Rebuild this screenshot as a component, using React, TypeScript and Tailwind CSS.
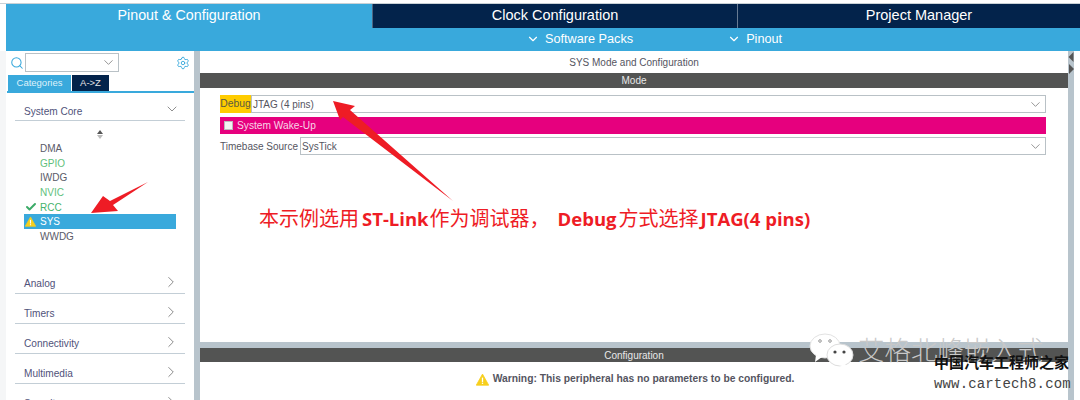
import React from "react";
import { ChevronDown, ChevronRight, Search, Settings, Check } from "lucide-react";

const sans = "font-['Liberation_Sans','Noto_Sans_CJK_SC',sans-serif]";

function Warn({ size = 12 }: { size?: number }) {
  return (
    <svg width={size} height={size} viewBox="0 0 24 24" className="shrink-0">
      <path d="M12 2 L23.5 22.5 H0.5 Z" fill="#f7cf1d" stroke="#f7cf1d" strokeLinejoin="round" strokeWidth="1.5" />
      <rect x="10.8" y="8.5" width="2.4" height="8" fill="#fff" />
      <rect x="10.8" y="17.8" width="2.4" height="2.4" fill="#fff" />
    </svg>
  );
}

function Group({ label, open }: { label: string; open?: boolean }) {
  return (
    <div className={`ml-[9px] flex h-[30px] w-[170px] items-end justify-between border-b border-[#c3ced6] pl-[9px] pr-[5px] text-[10.1px] text-[#50527a] ${open ? "pb-[1px]" : "pb-[2px]"}`}>
      <span className="leading-[14px]">{label}</span>
      {open ? (
        <ChevronDown size={16} strokeWidth={1.1} className="mb-[2px] text-[#666]" />
      ) : (
        <ChevronRight size={18} strokeWidth={1} className="text-[#666]" />
      )}
    </div>
  );
}

function Item({ label, color = "text-[#5a5a68]", icon, selected }: { label: string; color?: string; icon?: React.ReactNode; selected?: boolean }) {
  return (
    <div className={`flex h-[14.7px] w-[152px] items-center text-[10px] ${selected ? "bg-[#39a9dc] text-white" : color}`}>
      <span className="mr-[3px] flex w-[13px] justify-center">{icon}</span>
      <span>{label}</span>
    </div>
  );
}

function Select({ value, className }: { value: string; className?: string }) {
  return (
    <div className={`flex h-[18px] items-center justify-between border border-[#b9c1c6] bg-white pl-[1px] pr-[2px] text-[10px] text-[#55555f] ${className ?? ""}`}>
      <span>{value}</span>
      <ChevronDown size={15} strokeWidth={1.1} className="text-[#666]" />
    </div>
  );
}

function Bar({ children }: { children: string }) {
  return <div className="flex h-[15px] items-center justify-center bg-[#535453] text-[10px] text-[#e8e8e8]">{children}</div>;
}

export default function App() {
  return (
    <div className={`relative h-[400px] w-[1080px] overflow-hidden bg-white ${sans}`}>
      <div className="h-[4px] border-b border-[#c9d1d6] bg-white" />
      <div className="ml-[6px] flex h-[24px] w-[1074px] text-[14.3px] text-white">
        <div className="flex w-[366px] items-center justify-center bg-[#39a9dc]">Pinout &amp; Configuration</div>
        <div className="flex w-[365px] items-center justify-center border-l border-white/30 bg-[#03234b] text-[14.5px]">Clock Configuration</div>
        <div className="flex w-[343px] items-center justify-center border-l border-white/40 bg-[#03234b] pl-[20px] text-[14.5px]">Project Manager</div>
      </div>
      <div className="ml-[6px] flex h-[23px] w-[1074px] items-center bg-[#39a9dc] text-[12.7px] text-white">
        <div className="ml-[520px] flex items-center gap-[5px]">
          <ChevronDown size={14} strokeWidth={2} />
          <span>Software Packs</span>
        </div>
        <div className="ml-[94px] flex items-center gap-[5px]">
          <ChevronDown size={14} strokeWidth={2} />
          <span>Pinout</span>
        </div>
      </div>

      <div className="flex h-[349px]">
        <div className="w-[6px] bg-[#f5f6f7]" />
        <aside className="w-[188px] overflow-hidden bg-white">
          <div className="flex h-[22px] items-center pt-[1px]">
            <Search size={14} strokeWidth={1.8} className="ml-[4px] text-[#39a9dc]" />
            <div className="ml-[1px] flex h-[19px] w-[94px] items-center justify-end border border-[#b9c1c6] pr-[2px]">
              <ChevronDown size={15} strokeWidth={1.1} className="text-[#666]" />
            </div>
            <Settings size={14} strokeWidth={1.6} className="ml-[57px] text-[#39a9dc]" />
          </div>
          <div className="ml-[1px] mt-[2px] flex h-[18px] w-[187px] border-b-2 border-[#39a9dc] pl-[1px] text-[9.5px]">
            <div className="flex h-[16px] w-[63px] items-center justify-center bg-[#39a9dc] text-[#dff1fa]">Categories</div>
            <div className="ml-[1px] flex h-[16px] w-[37px] items-center justify-center bg-[#03234b] text-[#e6e6e6]">A-&gt;Z</div>
          </div>
          <div className="-mt-[2px]">
            <Group label="System Core" open />
          </div>
          <div className="flex h-[18px] items-end justify-center pr-[1px]">
            <svg width="6" height="9" viewBox="0 0 6 9">
              <path d="M3 0 L6 4 H0 Z" fill="#555" />
              <path d="M3 9 L6 5 H0 Z" fill="#bbb" />
            </svg>
          </div>
          <div className="ml-[18px] flex flex-col pt-[2px]">
            <Item label="DMA" />
            <Item label="GPIO" color="text-[#5fbf7c]" />
            <Item label="IWDG" />
            <Item label="NVIC" color="text-[#5fbf7c]" />
            <Item label="RCC" color="text-[#45b36b]" icon={<Check size={12} strokeWidth={4} className="text-[#3cab68]" />} />
            <Item label="SYS" selected icon={<Warn size={11} />} />
            <Item label="WWDG" />
          </div>
          <div className="h-[20px]" />
          <Group label="Analog" />
          <Group label="Timers" />
          <Group label="Connectivity" />
          <Group label="Multimedia" />
          <Group label="Security" />
        </aside>
        <div className="w-[6px] bg-[#b8c4cc]" />
        <main className="flex w-[868px] flex-col bg-white">
          <div className="flex h-[22px] items-center justify-center pt-[1px] text-[10px] text-[#55555f]">SYS Mode and Configuration</div>
          <Bar>Mode</Bar>
          <div className="flex h-[254px] flex-col pl-[20px] pr-[22px] pt-[7px]">
            <div className="flex h-[18px]">
              <div className="flex w-[31px] items-center justify-center bg-[#ffcc00] text-[10.3px] text-[#5a5a40]">Debug</div>
              <Select value="JTAG (4 pins)" className="flex-1" />
            </div>
            <div className="mt-[4px] flex h-[17px] items-center gap-[4px] bg-[#e6007e] pl-[4px] text-[10.2px] text-[#f8d5e8]">
              <span className="h-[9px] w-[9px] border border-[#bbb] bg-[#f2f2f2]" />
              <span>System Wake-Up</span>
            </div>
            <div className="mt-[3px] flex h-[18px] items-center gap-[2px] text-[10px] text-[#55555f]">
              <span>Timebase Source</span>
              <Select value="SysTick" className="flex-1" />
            </div>
          </div>
          <div className="h-[6px] bg-[#b8c4cc]" />
          <div className="h-[14px] overflow-hidden">
            <Bar>Configuration</Bar>
          </div>
          <div className="flex h-[34px] items-center justify-center gap-[4px] pl-[2px] text-[10.3px] font-bold text-[#55555f]">
            <Warn size={13} />
            <span>Warning: This peripheral has no parameters to be configured.</span>
          </div>
        </main>
        <div className="w-[6px] bg-[#b8c4cc]" />
        <div className="flex-1 bg-white" />
      </div>

      {/* right gutter splitter arrows */}
      <svg className="absolute left-[1068px] top-[50px]" width="6" height="24" viewBox="0 0 6 24">
        <path d="M5.5 2 L0.5 7 L5.5 12 Z" fill="#555" />
        <path d="M1 14 L6 19 L1 24 Z" fill="#555" />
      </svg>

      {/* annotation arrows */}
      <svg className="absolute left-0 top-0" width="1080" height="400" viewBox="0 0 1080 400">
        <path d="M333 101 L355 106 L350 110 L453 201 L343 117 L340 120 Z" fill="#ee1c25" />
        <path d="M148 182 L110 201 L103 196 L91 213 L118 211 L113 205 Z" fill="#ee1c25" />
      </svg>

      {/* annotation text */}
      <div className="absolute left-[259px] top-[206px] whitespace-nowrap font-['Open_Sans','Noto_Sans_CJK_SC',sans-serif] text-[20px] font-bold leading-[26px] text-[#ee1c25]">
        <span className="font-normal">本示例选用</span>
        <span className="ml-[3px] mr-[1px] text-[18.5px]">ST-Link</span>
        <span className="font-normal">作为调试器，</span>
        <span className="ml-[8px] mr-[2px] text-[18.5px]">Debug</span>
        <span className="font-normal">方式选择</span>
        <span className="ml-[2px] text-[18.5px]">JTAG(4 pins)</span>
      </div>

      {/* watermark */}
      <div className="absolute left-[808px] top-[331px]">
        <svg width="46" height="40" viewBox="0 0 46 40">
          <ellipse cx="17" cy="15" ry="12" rx="15" fill="#fff" stroke="#e2e2e2" />
          <path d="M8 24 L7 31 L14 26 Z" fill="#fff" />
          <circle cx="12" cy="10" r="1.3" fill="none" stroke="#999" />
          <circle cx="22" cy="10" r="1.3" fill="none" stroke="#999" />
          <ellipse cx="32" cy="24" rx="13" ry="11" fill="#fff" stroke="#ddd" />
          <path d="M37 33 L40 38 L31 35 Z" fill="#fff" />
          <circle cx="27" cy="21" r="1.6" fill="#444" />
          <circle cx="36" cy="21" r="1.6" fill="#444" />
        </svg>
      </div>
      <div className="absolute left-[858px] top-[334px] whitespace-nowrap text-[26.5px] leading-[30px] font-['Noto_Sans_CJK_SC',sans-serif] font-light text-[#c8c8c8]">艾格北峰嵌入式</div>
      <div className="absolute left-[934px] top-[352px] whitespace-nowrap font-['Noto_Sans_CJK_SC',serif] text-[15px] font-bold leading-[20px] text-[#111]">中国汽车工程师之家</div>
      <div className="absolute left-[934px] top-[376px] whitespace-nowrap font-['Liberation_Mono',monospace] text-[14px] leading-[17px] tracking-[0.15px] text-[#444]">www.cartech8.com</div>
    </div>
  );
}
